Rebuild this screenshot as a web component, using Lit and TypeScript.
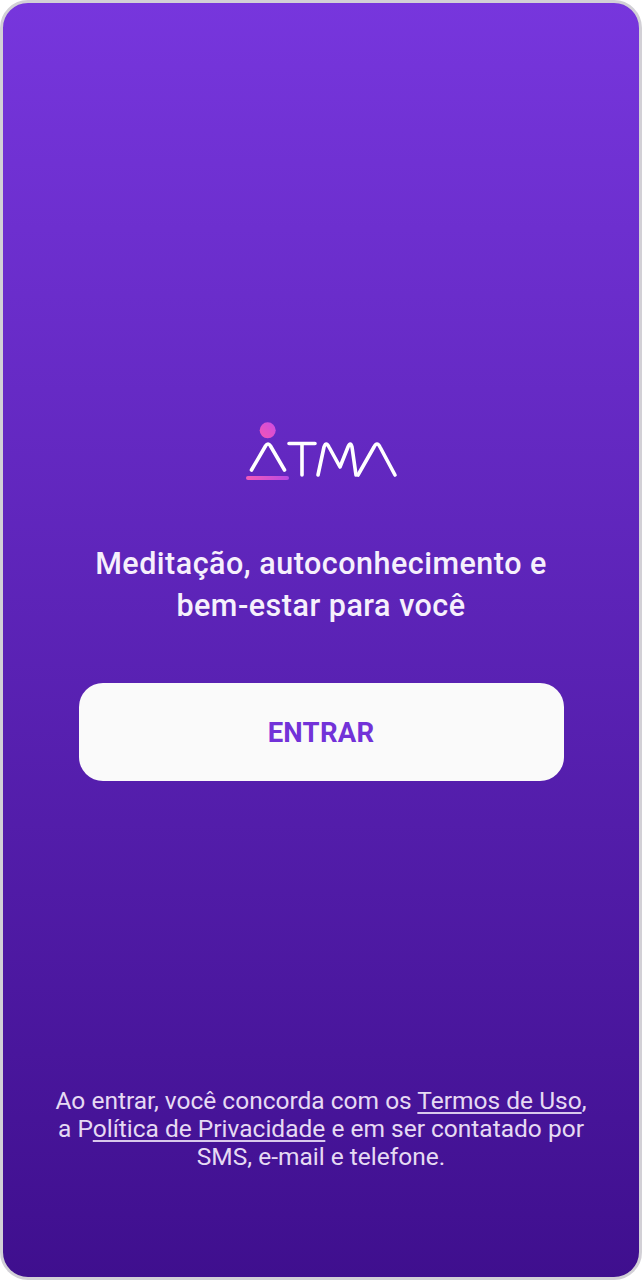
import { LitElement, css, html } from 'lit'
import { customElement } from 'lit/decorators.js'

@customElement('app-root')
export class AppRoot extends LitElement {
  static styles = css`
    :host {
      display: block;
      width: 642px;
      height: 1280px;
      background: #fff;
      font-family: Roboto, 'Liberation Sans', sans-serif;
    }
    .screen {
      box-sizing: border-box;
      width: 642px;
      height: 1280px;
      border: 3px solid #d2d0d6;
      border-radius: 28px;
      background: linear-gradient(180deg, #7736dd 0%, #3f0f8e 100%);
      background-origin: border-box;
      display: flex;
      flex-direction: column;
      align-items: center;
      color: #fff;
    }
    .logo {
      display: block;
      margin-top: 417px;
    }
    h1 {
      margin: 57px 0 0;
      font-size: 30.5px;
      line-height: 42px;
      font-weight: 500;
      letter-spacing: 0.5px;
      text-align: center;
      white-space: nowrap;
      color: #f6f0fc;
    }
    .enter {
      width: 485px;
      height: 98px;
      margin-top: 56px;
      border: 0;
      border-radius: 24px;
      background: #fafafa;
      color: #7232d8;
      font: 700 27.5px Roboto, 'Liberation Sans', sans-serif;
      letter-spacing: 0.25px;
    }
    .legal {
      margin: 306px 0 0;
      width: 600px;
      font-size: 24.5px;
      line-height: 28px;
      text-align: center;
      white-space: nowrap;
      color: #e6daf3;
    }
    .legal a {
      color: inherit;
      text-decoration: underline;
      text-underline-offset: 3px;
      text-decoration-thickness: 1.5px;
      text-decoration-color: #d9c9ec;
    }
  `

  render() {
    return html`
      <div class="screen">
        <svg class="logo" width="156" height="66" viewBox="0 0 156 66" fill="none">
          <defs>
            <linearGradient id="dot" x1="0" y1="1" x2="1" y2="0">
              <stop offset="0" stop-color="#f454b4" />
              <stop offset="1" stop-color="#cc4ce4" />
            </linearGradient>
            <linearGradient id="bar" x1="0" y1="0" x2="1" y2="0">
              <stop offset="0" stop-color="#f45cb8" />
              <stop offset="1" stop-color="#b848e4" />
            </linearGradient>
          </defs>
          <circle cx="24.7" cy="10.3" r="8" fill="url(#dot)" />
          <g stroke="#fff" stroke-width="3.6" stroke-linecap="round" stroke-linejoin="round">
            <path d="M8.500 50 22.500 26Q25 22 27.500 26L41.500 50" />
            <path d="M46 23.500H72M59 23.500V55" />
            <path d="M75 55 81 27Q83 21 86 27L97 47 105 27Q107.500 21 109 27L113 55" />
            <path d="M115 55 131 27Q134 21 137 27L152 55" />
          </g>
          <rect x="3" y="56" width="43" height="4" rx="2" fill="url(#bar)" />
        </svg>
        <h1>Meditação, autoconhecimento e<br />bem-estar para você</h1>
        <button class="enter">ENTRAR</button>
        <p class="legal">
          Ao entrar, você concorda com os <a>Termos de Uso</a>,<br />
          a P<a>olítica de Privacidade</a> e em ser contatado por<br />
          SMS, e-mail e telefone.
        </p>
      </div>
    `
  }
}
